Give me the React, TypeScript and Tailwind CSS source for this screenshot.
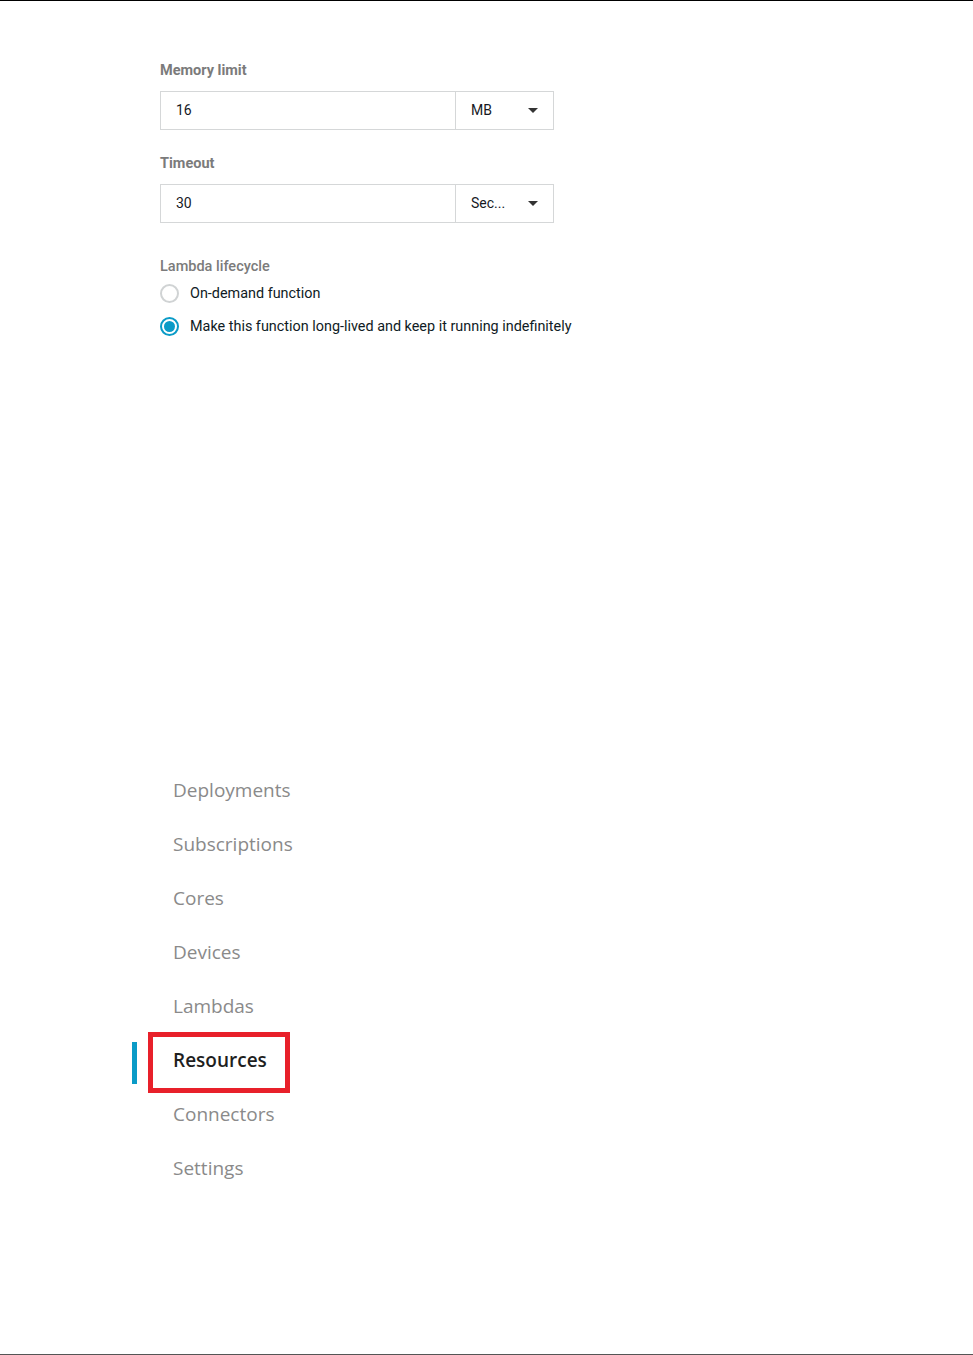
const navItems = ['Deployments', 'Subscriptions', 'Cores', 'Devices', 'Lambdas', 'Resources', 'Connectors', 'Settings'];

function Caret() {
    return (
        <svg width="10" height="5" viewBox="0 0 10 5" className="mr-[15px]" aria-hidden>
            <path d="M0 0 L10 0 L5 5 Z" fill="#333" />
        </svg>
    );
}

function UnitInput({ value, unit }: { value: string; unit: string }) {
    return (
        <div className="flex h-[39px] w-[394px]">
            <div className="flex flex-1 items-center border border-[#d5d7d8] pl-[15px] text-[14px] text-[#16191f]">{value}</div>
            <div className="-ml-px flex w-[99px] items-center justify-between border border-[#d5d7d8] pl-[15px] text-[14px] text-[#16191f]">
                <span>{unit}</span>
                <Caret />
            </div>
        </div>
    );
}

function Radio({ checked, label }: { checked?: boolean; label: string }) {
    return (
        <label className="flex h-[33px] items-center gap-[11px]">
            {checked ? (
                <span className="flex h-[19px] w-[19px] items-center justify-center rounded-full border-[2px] border-[#0a9bc7]">
                    <span className="h-[11px] w-[11px] rounded-full bg-[#0a9bc7]" />
                </span>
            ) : (
                <span className="h-[19px] w-[19px] rounded-full border-[2px] border-[#d0d3d4]" />
            )}
            <span className="text-[14.4px] text-[#0f1b24]">{label}</span>
        </label>
    );
}

export default function App() {
    return (
        <div className="flex h-[1355px] flex-col border-t border-b border-t-black border-b-[#555] bg-white font-['Roboto',sans-serif]">
            {/* Function settings */}
            <div className="flex flex-col pl-[160px] pt-[60px]">
                <div className="mb-[10px] text-[14.5px] leading-[20px] font-bold text-[#7b7b7b]">Memory limit</div>
                <UnitInput value="16" unit="MB" />
                <div className="mt-[24px] mb-[10px] text-[14.5px] leading-[20px] font-bold text-[#7b7b7b]">Timeout</div>
                <UnitInput value="30" unit="Sec..." />
                <div className="mt-[34px] text-[14.5px] leading-[20px] font-medium text-[#7b7b7b]">Lambda lifecycle</div>
                <div className="flex flex-col">
                    <Radio label="On-demand function" />
                    <Radio checked label="Make this function long-lived and keep it running indefinitely" />
                </div>
            </div>

            {/* Group nav */}
            <nav className="mt-[420px] flex flex-col pl-[173px] font-['Open_Sans',sans-serif]">
                {navItems.map((item) => {
                    const active = item === 'Resources';
                    return (
                        <div key={item} className="flex h-[54px] items-center">
                            <span className={active ? 'relative text-[19px] font-semibold text-[#1f1f1f]' : 'text-[19px] text-[#8a8a8a]'}>
                                {active && (
                                    <>
                                        <span className="absolute top-[-4px] left-[-41px] h-[42px] w-[5px] bg-[#0a9bc7]" />
                                        <span className="absolute top-[-14px] left-[-25px] h-[61px] w-[142px] border-[5px] border-[#e8202a]" />
                                    </>
                                )}
                                {item}
                            </span>
                        </div>
                    );
                })}
            </nav>
        </div>
    );
}
